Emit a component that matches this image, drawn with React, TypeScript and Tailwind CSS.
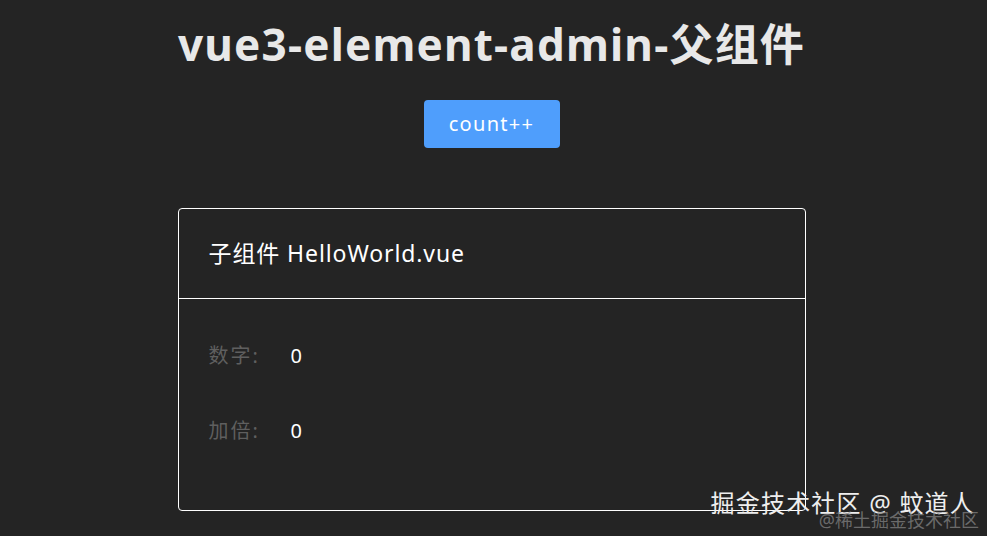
import React from "react";

export default function App() {
  const font = { fontFamily: '"Noto Sans", "Noto Sans CJK SC", sans-serif' } as React.CSSProperties;
  return (
    <div className="relative w-[987px] h-[536px] overflow-hidden bg-[#242424] text-[#e5e5e5]" style={font}>
      <div className="flex flex-col items-center pt-[13px] pr-[4px]">
        <h1 className="text-[44px] leading-[62px] font-bold text-[#e8e8e8] tracking-[1.2px]">vue3-element-admin-父组件</h1>
        <button className="mt-[25px] w-[136px] h-[48px] rounded-[4px] bg-[#4f9efc] text-white text-[20px] tracking-[1.3px]">count++</button>
        <div className="mt-[60px] w-[628px] h-[303px] border border-white rounded-[4px] flex flex-col">
          <div className="h-[90px] flex items-center px-[30px] text-[23px] tracking-[0.9px] text-white border-b border-white">子组件 HelloWorld.vue</div>
          <div className="flex flex-col pt-[44px] px-[30px] gap-[50px]">
            <div className="flex items-center h-[25px]">
              <span className="w-[82px] text-[20px] tracking-[2px] text-[#5f5f5f]">数字:</span>
              <span className="text-[20px] text-white">0</span>
            </div>
            <div className="flex items-center h-[25px]">
              <span className="w-[82px] text-[20px] tracking-[2px] text-[#5f5f5f]">加倍:</span>
              <span className="text-[20px] text-white">0</span>
            </div>
          </div>
        </div>
      </div>
      <div className="absolute right-[12px] top-[487px] text-[24px] leading-[32px] tracking-[1.2px] text-[#eeeeee]">掘金技术社区 @ 蚊道人</div>
      <div className="absolute right-[8px] top-[508px] text-[18px] leading-[24px] text-[#8a8a8a]/70">@稀土掘金技术社区</div>
    </div>
  );
}
